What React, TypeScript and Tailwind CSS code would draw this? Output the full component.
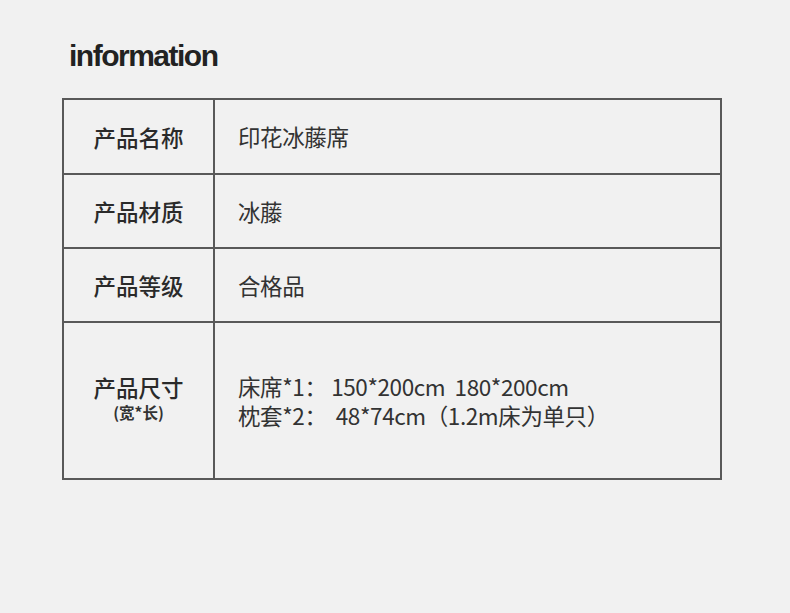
const rows: { label: string; sub?: string; values: string[]; h: string }[] = [
  { label: "产品名称", values: ["印花冰藤席"], h: "h-[73px]" },
  { label: "产品材质", values: ["冰藤"], h: "h-[74px]" },
  { label: "产品等级", values: ["合格品"], h: "h-[74px]" },
  {
    label: "产品尺寸",
    sub: "(宽*长)",
    values: ["床席*1： 150*200cm  180*200cm", "枕套*2：  48*74cm（1.2m床为单只）"],
    h: "h-[157px]",
  },
];

export default function App() {
  return (
    <div
      className="w-[790px] h-[613px] bg-[#f1f1f1] text-[#333]"
      style={{ fontFamily: '"Noto Sans CJK SC", "Noto Sans", sans-serif' }}
    >
      <div className="pl-[62px] pt-[36px]">
        <h1
          className="pl-[7px] text-[30px] font-bold leading-[40px] tracking-[-1.5px] text-[#222]"
          style={{ fontFamily: '"Liberation Sans", Arial, sans-serif' }}
        >
          information
        </h1>
        <div className="mt-[22px] w-[660px] border-2 border-[#595959]">
          {rows.map((r, i) => (
            <div
              key={r.label}
              className={`flex ${r.h} ${i > 0 ? "border-t-2 border-[#595959]" : ""}`}
            >
              <div
                className={`w-[151px] shrink-0 border-r-2 border-[#595959] flex flex-col items-center justify-center ${r.sub ? "pb-[8px]" : ""}`}
              >
                <div className="text-[22.5px] font-medium leading-[28px] text-[#2a2a2a]">{r.label}</div>
                {r.sub && (
                  <div className="text-[15.5px] font-bold leading-[18px] mt-[2px] text-[#333]">{r.sub}</div>
                )}
              </div>
              <div className="flex-1 pl-[23px] flex flex-col justify-center">
                {r.values.map((v) => (
                  <div key={v} className="text-[22.5px] leading-[29px] whitespace-pre tracking-[-0.4px]">
                    {v}
                  </div>
                ))}
              </div>
            </div>
          ))}
        </div>
      </div>
    </div>
  );
}
